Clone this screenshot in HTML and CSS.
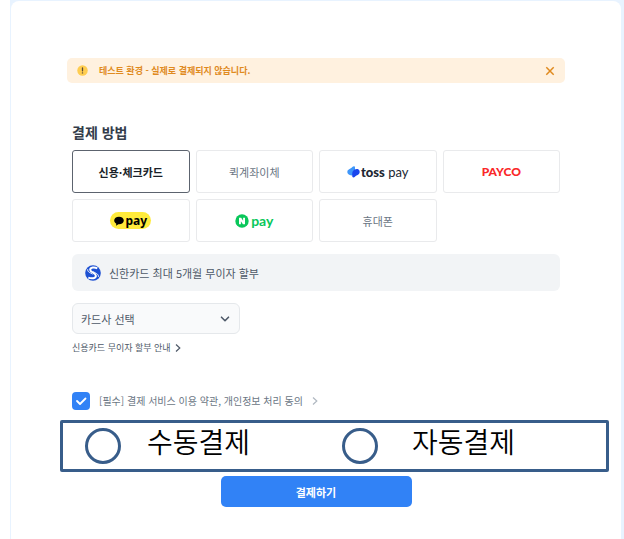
FILE: index.html
```html
<!DOCTYPE html>
<html lang="ko">
<head>
<meta charset="utf-8">
<meta name="viewport" content="width=device-width, initial-scale=1">
<title>결제</title>
<link rel="stylesheet" href="styles.css">
</head>
<body>
<div class="backdrop">
<main class="sheet">
  <div class="notice" role="status">
    <svg class="notice-icon" viewBox="0 0 12 12" aria-hidden="true"><circle cx="6" cy="6" r="5.7" fill="#ffcd50"/><path d="M6 3.2v3.2" stroke="#5b4a3c" stroke-width="1.4" stroke-linecap="round"/><circle cx="6" cy="8.6" r=".8" fill="#5b4a3c"/></svg>
    <span class="notice-text">테스트 환경 - 실제로 결제되지 않습니다.</span>
    <button class="notice-close" type="button" aria-label="닫기"><svg viewBox="0 0 10 10" aria-hidden="true"><path d="M1.3 1.3l7.4 7.4M8.7 1.3L1.3 8.7" fill="none" stroke="#e08a1e" stroke-width="1.5"/></svg></button>
  </div>

  <h1 class="title">결제 방법</h1>
  <div class="methods">
    <button class="method method-selected" type="button" aria-pressed="true">신용·체크카드</button>
    <button class="method" type="button">퀵계좌이체</button>
    <button class="method toss" type="button">
      <svg class="toss-mark" viewBox="0 0 13 12" aria-hidden="true"><path d="M7 .3C8.200 .2 8 1.500 8 3v5.500L4.500 9.400C2 9 .3 7.800 .3 5.900c0-2 1.900-2.700 3.500-3.600C5 1.600 5.700.5 7 .3z" fill="#3e96fa"/><path d="M6 5c1-1.500 3-2.400 4.600-2 1.300.4 2.100 1.500 2.100 2.900 0 2-1.600 2.900-3.200 3.700-1.200.7-1.900 1.900-3 1.900-1 0-1.300-.8-1.300-2.200 0-1.900.1-3.200.8-4.300z" fill="#1945ed"/></svg>
      <span><b>toss</b> pay</span>
    </button>
    <button class="method payco" type="button">PAYCO</button>
    <button class="method" type="button">
      <span class="kakao"><svg class="kakao-mark" viewBox="0 0 10 10" aria-hidden="true"><path d="M5 .8C2.200.8.2 2.500.2 4.600c0 1.400.8 2.500 2.100 3.200L2 9.700l2.400-1.400H5c2.700 0 4.800-1.600 4.800-3.700S7.700.8 5 .8z" fill="#000"/></svg><span>pay</span></span>
    </button>
    <button class="method naver" type="button">
      <svg class="naver-mark" viewBox="0 0 14 14" aria-hidden="true"><circle cx="7" cy="7" r="6.700" fill="#09c75a"/><path d="M4 3.700h2.200l1.900 3V3.700H10v6.600H7.900L5.900 7.300v3H4z" fill="#fff"/></svg>
      <span>pay</span>
    </button>
    <button class="method" type="button">휴대폰</button>
  </div>

  <p class="promo">
    <svg class="promo-mark" viewBox="0 0 16 16" aria-hidden="true"><circle cx="8" cy="8" r="7.800" fill="#1d50d2"/><path d="M12.300 3.300C9.500 1.900 5.200 2.200 5.200 4.700c0 3 5.700 2.800 5.700 6 0 2.700-4.200 3.200-7.600 1.900" fill="none" stroke="#fff" stroke-width="2"/><path d="M2.700 4.300c-.4 3.300 3.800 3.400 4.800 5.100M13.400 11.800c.4-3.300-3.800-3.600-4.900-5.300" fill="none" stroke="#fff" stroke-width="1"/></svg>
    <span>신한카드 최대 5개월 무이자 할부</span>
  </p>

  <div class="issuer">
    <select class="issuer-select" aria-label="카드사 선택"><option>카드사 선택</option></select>
    <svg class="issuer-arrow" viewBox="0 0 10 10" aria-hidden="true"><path d="M1.500 3.200L5 6.700l3.500-3.500" fill="none" stroke="#4e5968" stroke-width="1.600" stroke-linecap="round" stroke-linejoin="round"/></svg>
  </div>
  <a class="guide" href="#"><span>신용카드 무이자 할부 안내</span><svg class="chevron" viewBox="0 0 6 10" aria-hidden="true"><path d="M1 1.500L4.800 5 1 8.500" fill="none" stroke="currentColor" stroke-width="1.200"/></svg></a>

  <div class="terms">
    <input class="terms-box" type="checkbox" id="terms" checked>
    <label for="terms">[필수] 결제 서비스 이용 약관, 개인정보 처리 동의</label>
    <a class="terms-link" href="#" aria-label="약관 보기"><svg class="chevron" viewBox="0 0 6 10" aria-hidden="true"><path d="M1 1.500L4.800 5 1 8.500" fill="none" stroke="currentColor" stroke-width="1.200"/></svg></a>
  </div>

  <div class="modes" role="radiogroup" aria-label="결제 방식">
    <input class="mode-radio" type="radio" name="mode" id="manual"><label for="manual">수동결제</label>
    <input class="mode-radio" type="radio" name="mode" id="auto"><label for="auto">자동결제</label>
  </div>

  <button class="pay" type="button">결제하기</button>
</main>
</div>
</body>
</html>
```
FILE: styles.css
```css
* { box-sizing: border-box; }

body {
  margin: 0;
  background: #fff;
  color: #4e5968;
  font-family: "Noto Sans CJK KR", sans-serif;
  font-size: 11px;
  line-height: 16px;
}

button, select, input { font: inherit; color: inherit; margin: 0; }
button { cursor: pointer; }
a { color: inherit; text-decoration: none; }
svg { display: block; flex: none; }

.backdrop {
  min-height: 100vh;
  margin-left: 10px;
  padding: 1px 3px 0 1px;
  background: #e8f3ff;
  display: flex;
}

.sheet {
  flex: 1;
  display: flex;
  flex-direction: column;
  padding: 57px 61px 32px;
  background: #fff;
  border-radius: 8px 8px 0 0;
}

.notice {
  display: flex;
  align-items: center;
  height: 25px;
  margin: 0 -5px;
  padding: 0 10px;
  border-radius: 5px;
  background: #fff1df;
  color: #e08a1e;
  font-size: 9px;
  font-weight: 700;
}
.notice-icon { width: 11px; height: 11px; margin-right: 11px; }
.notice-text { flex: 1; }
.notice-close { padding: 0; border: 0; background: none; }
.notice-close svg { width: 10px; height: 10px; }

.title {
  margin: 39px 0 8px;
  color: #333d4b;
  font-size: 14px;
  line-height: 20px;
  font-weight: 700;
}

.methods {
  display: grid;
  grid-template-columns: repeat(4, 1fr);
  gap: 6px;
}
.method {
  display: flex;
  align-items: center;
  justify-content: center;
  height: 43px;
  padding: 0;
  border: 1px solid #e9eaec;
  border-radius: 3px;
  background: #fff;
  color: #6b7684;
}
.method-selected { border-color: #5c636e; color: #191f28; font-weight: 700; }

.toss { gap: 1px; color: #202632; font-family: Lato, sans-serif; font-size: 13px; }
.toss b { font-weight: 900; }
.toss-mark { width: 13px; height: 12px; }

.payco { color: #fa2828; font-family: Lato, sans-serif; font-size: 12px; font-weight: 900; }

.kakao {
  display: flex;
  align-items: center;
  gap: 1px;
  height: 17px;
  padding: 0 4px;
  border-radius: 9px;
  background: #ffeb3c;
  color: #000;
  font-family: "Noto Sans", sans-serif;
  font-size: 12px;
  font-weight: 700;
}
.kakao-mark { width: 10px; height: 10px; }

.naver { gap: 2px; color: #09c75a; font-family: Lato, sans-serif; font-size: 14px; font-weight: 700; }
.naver-mark { width: 14px; height: 14px; }

.promo {
  display: flex;
  align-items: center;
  gap: 8px;
  height: 37px;
  margin: 12px 0;
  padding: 0 13px;
  border-radius: 6px;
  background: #f2f4f6;
}
.promo-mark { width: 16px; height: 16px; }

.issuer { display: grid; width: 168px; align-items: center; }
.issuer > * { grid-area: 1 / 1; }
.issuer-select {
  appearance: none;
  width: 100%;
  height: 31px;
  padding: 0 8px;
  border: 1px solid #e5e8eb;
  border-radius: 6px;
  background: #f9fafb;
}
.issuer-arrow { width: 10px; height: 10px; justify-self: end; margin-right: 10px; pointer-events: none; }

.guide {
  display: flex;
  align-items: center;
  align-self: flex-start;
  gap: 4px;
  margin-top: 6px;
  font-size: 9px;
}
.chevron { width: 6px; height: 10px; }

.terms {
  display: flex;
  align-items: center;
  gap: 9px;
  margin-top: 36px;
  color: #6b7684;
  font-size: 10px;
}
.terms-box {
  appearance: none;
  flex: none;
  width: 18px;
  height: 18px;
  border-radius: 4px;
  background: #3182f6 url("data:image/svg+xml,%3Csvg xmlns='http://www.w3.org/2000/svg' viewBox='0 0 18 18'%3E%3Cpath d='M5 9l3 3 5.500-5.500' fill='none' stroke='white' stroke-width='1.800' stroke-linecap='round' stroke-linejoin='round'/%3E%3C/svg%3E") center / 100%;
}
.terms-link { color: #b0b8c1; }

.modes {
  display: grid;
  grid-template-columns: 62px 195px 70px 1fr;
  margin: 10px -49px 4px -12px;
  padding: 5px 22px;
  border: 3px solid #385d8a;
  border-radius: 2px;
  color: #000;
  font-size: 28px;
  font-weight: 350;
  line-height: 26px;
}
.mode-radio {
  appearance: none;
  width: 36px;
  height: 36px;
  border: 3px solid #385d8a;
  border-radius: 50%;
}
.mode-radio:checked { box-shadow: inset 0 0 0 6px #fff; background: #385d8a; }

.pay {
  align-self: center;
  width: 191px;
  height: 31px;
  padding: 0;
  border: 0;
  border-radius: 5px;
  background: #3182f6;
  color: #fff;
  font-weight: 700;
}
```
